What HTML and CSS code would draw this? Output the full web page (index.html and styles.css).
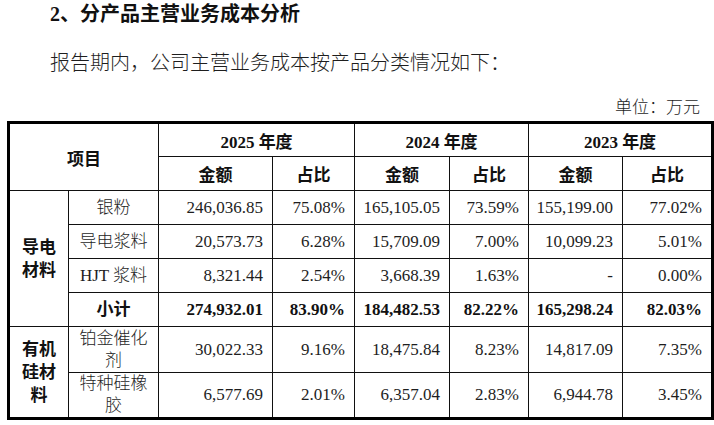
FILE: index.html
```html
<!DOCTYPE html>
<html lang="zh">
<head>
<meta charset="utf-8">
<link rel="stylesheet" href="styles.css">
</head>
<body>
<div class="page">
  <h2 class="title">2、分产品主营业务成本分析</h2>
  <p class="intro">报告期内，公司主营业务成本按产品分类情况如下：</p>
  <div class="unit">单位：万元</div>
  <table class="cost">
    <colgroup>
      <col class="c1"><col class="c2"><col class="c3"><col class="c4">
      <col class="c5"><col class="c6"><col class="c7"><col class="c8">
    </colgroup>
    <thead>
      <tr class="hrow">
        <th colspan="2" rowspan="2">项目</th>
        <th colspan="2">2025 年度</th>
        <th colspan="2">2024 年度</th>
        <th colspan="2">2023 年度</th>
      </tr>
      <tr class="hrow">
        <th>金额</th><th>占比</th>
        <th>金额</th><th>占比</th>
        <th>金额</th><th>占比</th>
      </tr>
    </thead>
    <tbody>
      <tr class="row">
        <th rowspan="4" class="group">导电<br>材料</th>
        <td class="name">银粉</td>
        <td class="num">246,036.85</td><td class="num">75.08%</td>
        <td class="num">165,105.05</td><td class="num">73.59%</td>
        <td class="num">155,199.00</td><td class="num">77.02%</td>
      </tr>
      <tr class="row">
        <td class="name">导电浆料</td>
        <td class="num">20,573.73</td><td class="num">6.28%</td>
        <td class="num">15,709.09</td><td class="num">7.00%</td>
        <td class="num">10,099.23</td><td class="num">5.01%</td>
      </tr>
      <tr class="row">
        <td class="name">HJT 浆料</td>
        <td class="num">8,321.44</td><td class="num">2.54%</td>
        <td class="num">3,668.39</td><td class="num">1.63%</td>
        <td class="num">-</td><td class="num">0.00%</td>
      </tr>
      <tr class="row total">
        <td class="name">小计</td>
        <td class="num">274,932.01</td><td class="num">83.90%</td>
        <td class="num">184,482.53</td><td class="num">82.22%</td>
        <td class="num">165,298.24</td><td class="num">82.03%</td>
      </tr>
      <tr class="row tall">
        <th rowspan="2" class="group">有机<br>硅材<br>料</th>
        <td class="name wrap">铂金催化<br>剂</td>
        <td class="num">30,022.33</td><td class="num">9.16%</td>
        <td class="num">18,475.84</td><td class="num">8.23%</td>
        <td class="num">14,817.09</td><td class="num">7.35%</td>
      </tr>
      <tr class="row tall">
        <td class="name wrap">特种硅橡<br>胶</td>
        <td class="num">6,577.69</td><td class="num">2.01%</td>
        <td class="num">6,357.04</td><td class="num">2.83%</td>
        <td class="num">6,944.78</td><td class="num">3.45%</td>
      </tr>
    </tbody>
  </table>
</div>
</body>
</html>
```
FILE: styles.css
```css
html, body {
  margin: 0;
  padding: 0;
  background: #ffffff;
}

.page {
  width: 714px;
  height: 425px;
  overflow: hidden;
  font-family: "Liberation Serif", "Noto Sans CJK SC", serif;
  color: #222;
}

.title {
  margin: 0;
  padding-left: 50px;
  font-size: 20px;
  line-height: 28px;
  font-weight: 700;
  color: #111;
}

.intro {
  margin: 21px 0 0;
  padding-left: 50px;
  font-size: 20px;
  line-height: 28px;
  font-weight: 300;
  color: #1e1e1e;
}

.unit {
  margin-top: 19px;
  width: 700px;
  text-align: right;
  font-size: 17px;
  line-height: 24px;
  font-weight: 300;
  color: #1e1e1e;
}

.cost {
  margin: 1px 0 0 7px;
  width: 704px;
  table-layout: fixed;
  border-collapse: collapse;
  border: 3px solid #000;
  font-size: 17px;
}

.c1 { width: 60px; }
.c2 { width: 90px; }
.c3 { width: 114px; }
.c4 { width: 82px; }
.c5 { width: 95px; }
.c6 { width: 79px; }
.c7 { width: 94px; }
.c8 { width: 90px; }

.cost th,
.cost td {
  border: 1px solid #111;
  padding: 0;
  vertical-align: middle;
}

.cost th {
  font-weight: 700;
  color: #111;
  text-align: center;
}

.hrow { height: 34px; }
.row { height: 34px; }
.row.tall { height: 46px; }

.cost td {
  font-weight: 300;
  line-height: 24px;
  color: #1e1e1e;
}

.cost .group {
  line-height: 23px;
}

.cost .name {
  text-align: center;
}

.cost .name.wrap {
  line-height: 22px;
}

.cost .num {
  text-align: right;
  padding-right: 9px;
  font-weight: 400;
}

.cost .total td {
  font-weight: 700;
  color: #111;
}
```
